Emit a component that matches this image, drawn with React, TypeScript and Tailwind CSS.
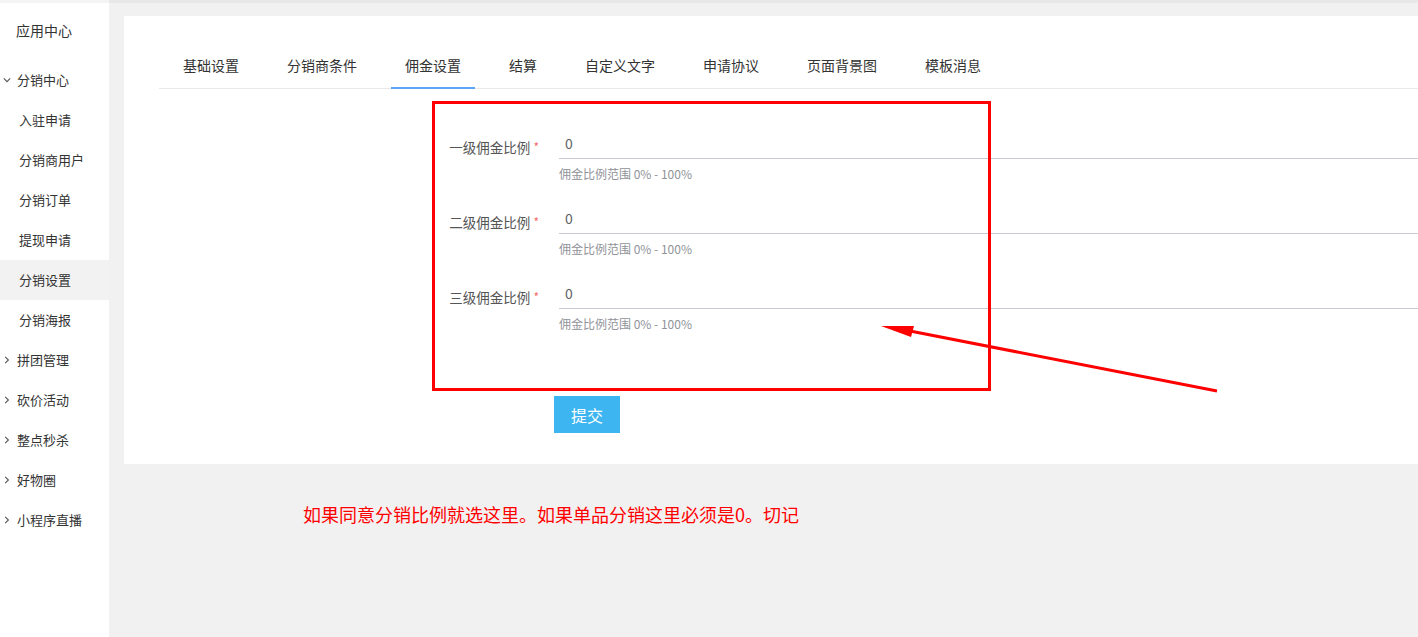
import React from "react";

const font = { fontFamily: '"Noto Sans CJK SC", "Noto Sans", sans-serif' };

const menu = [
  { label: "入驻申请" },
  { label: "分销商用户" },
  { label: "分销订单" },
  { label: "提现申请" },
  { label: "分销设置", active: true },
  { label: "分销海报" },
];

const groups = ["拼团管理", "砍价活动", "整点秒杀", "好物圈", "小程序直播"];

const tabs = ["基础设置", "分销商条件", "佣金设置", "结算", "自定义文字", "申请协议", "页面背景图", "模板消息"];

const levels = ["一级佣金比例", "二级佣金比例", "三级佣金比例"];

const Chevron = ({ down }: { down?: boolean }) => (
  <svg width="8" height="8" viewBox="0 0 8 8" className="shrink-0">
    {down ? (
      <path d="M0.8 2.4 L4 5.6 L7.2 2.4" fill="none" stroke="#555" strokeWidth="1.1" />
    ) : (
      <path d="M2.2 0.8 L5.4 4 L2.2 7.2" fill="none" stroke="#555" strokeWidth="1.1" />
    )}
  </svg>
);

const Sidebar = () => (
  <aside className="w-[109px] h-[637px] shrink-0 bg-white border-t-[3px] border-[#f4f4f4] pt-[7px] text-[13px] text-[#333]">
    <div className="h-[40px] flex items-center pl-[16px] text-[14px]">应用中心</div>
    <div className="h-[40px] mt-[10px] flex items-center pl-[3px] gap-[6px]">
      <Chevron down />
      <span>分销中心</span>
    </div>
    {menu.map((m) => (
      <div key={m.label} className={`h-[40px] flex items-center pl-[19px] ${m.active ? "bg-[#f2f2f2]" : ""}`}>
        {m.label}
      </div>
    ))}
    {groups.map((g) => (
      <div key={g} className="h-[40px] flex items-center pl-[3px] gap-[6px]">
        <Chevron />
        <span>{g}</span>
      </div>
    ))}
  </aside>
);

const Tabs = () => (
  <div className="ml-[35px] pl-[10px] flex gap-[20px] border-b border-[#e8e8e8] text-[14px] text-[#333]">
    {tabs.map((t) => (
      <div
        key={t}
        className={`px-[14px] leading-[20px] pb-[12px] -mb-px border-b-2 ${t === "佣金设置" ? "border-[#58a6f5]" : "border-transparent"}`}
      >
        {t}
      </div>
    ))}
  </div>
);

const FormRow = ({ label }: { label: string }) => (
  <div className="flex mb-[22px]">
    <div className="w-[120px] text-right pt-[3px] leading-[28px] text-[13.5px] text-[#555]">
      {label} <span className="text-[#f56c6c] text-[12px] relative -top-[1px]">*</span>
    </div>
    <div className="flex-1 ml-[20px]">
      <div className="h-[29px] border-b border-[#c8ccd2] pl-[6px] leading-[27px] text-[14px] text-[#606266]">0</div>
      <div className="mt-[6px] leading-[18px] text-[12px] text-[#909399]">佣金比例范围 0% - 100%</div>
    </div>
  </div>
);

export default function App() {
  return (
    <div className="relative w-[1418px] h-[637px] overflow-hidden flex bg-[#f1f1f1]" style={font}>
      <Sidebar />
      <main className="flex-1 border-t-[3px] border-[#e8e8e8] pt-[13px]">
        <section className="ml-[15px] h-[448px] bg-white pt-[39px]">
          <Tabs />
          <div className="pl-[295px] pt-[41px]">
            {levels.map((l) => (
              <FormRow key={l} label={l} />
            ))}
            <button className="ml-[135px] mt-[41px] w-[66px] h-[37px] bg-[#3db5f0] text-white text-[16px]">提交</button>
          </div>
        </section>
        <p className="ml-[194px] mt-[38px] leading-[24px] text-[18px] text-[#ff0000]">
          如果同意分销比例就选这里。如果单品分销这里必须是0。切记
        </p>
      </main>

      {/* annotation overlay */}
      <div className="absolute left-[432px] top-[101px] w-[559px] h-[290px] border-[3px] border-[#ff0000] pointer-events-none" />
      <svg className="absolute left-0 top-0 pointer-events-none" width="1418" height="637">
        <line x1="1217" y1="391" x2="910" y2="331" stroke="#ff0000" strokeWidth="3" />
        <polygon points="881,326 914,326 911,337" fill="#ff0000" />
      </svg>
    </div>
  );
}
